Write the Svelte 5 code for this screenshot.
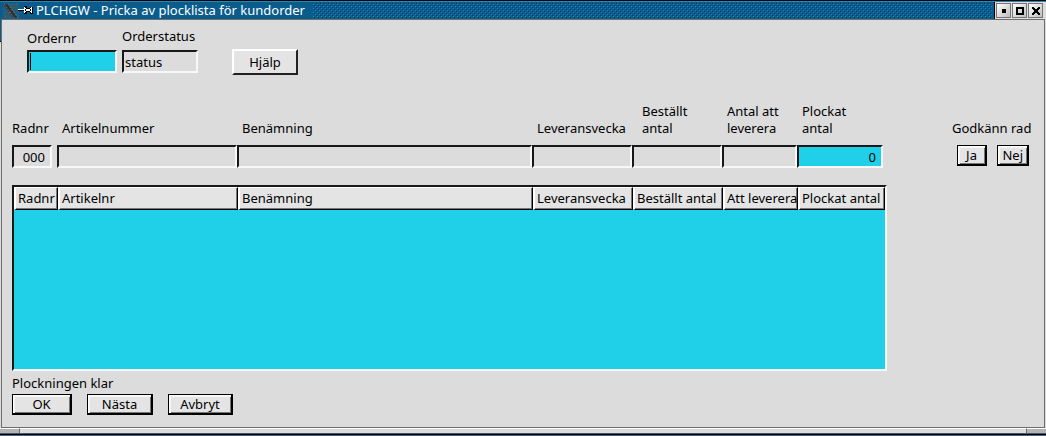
<script>
  let orderNo = $state('');
  let picked = $state('0');

  const fields = [
    { id: 'artikel', label: 'Artikelnummer' },
    { id: 'benamning', label: 'Benämning' },
    { id: 'vecka', label: 'Leveransvecka' },
    { id: 'bestallt', label: 'Beställt\nantal', inset: true },
    { id: 'leverera', label: 'Antal att\nleverera' }
  ];
  const columns = ['Radnr', 'Artikelnr', 'Benämning', 'Leveransvecka', 'Beställt antal', 'Att leverera', 'Plockat antal'];
</script>

<div class="window">
  <header class="titlebar">
    <svg class="xlogo" width="16" height="16" viewBox="0 0 16 16" aria-hidden="true">
      <path d="M0 0h16v16H0z" fill="#1f5f80" />
      <path d="M0 1h5l10 14h-5z" fill="#2c3234" />
      <path d="M13 1h2L9 8 8 7zM7 8l1 1-6 6H0z" fill="#3c4446" />
      <path d="M1 1l10 14M5 1l10 14M14 1L9 7M7 9l-6 6" stroke="#7d7d7d" stroke-dasharray="1 1" fill="none" />
    </svg>
    <svg class="pin" width="15" height="9" viewBox="0 0 15 9" shape-rendering="crispEdges" aria-hidden="true">
      <path d="M0 5h7V4H0zM6 0h3v2h3V1h3v7h-3V6H9v2H6z" fill="#000" />
      <path d="M0 3h6v1H0zM6 1h1v6H6zM8 3h4v2H8zM13 1h1v6h-1zM12 2h1v1h-1zM12 5h1v1h-1zM7 2h1v1H7zM7 5h1v1H7z" fill="#fff" />
    </svg>
    <h1>PLCHGW - Pricka av plocklista för kundorder</h1>
    <svg class="grip" shape-rendering="crispEdges" aria-hidden="true">
      <defs>
        <pattern id="dots" width="4" height="4" patternUnits="userSpaceOnUse">
          <path d="M0 1h1v1H0zM2 3h1v1H2z" fill="#1a8ac8" />
          <path d="M1 2h1v1H1zM3 0h1v1H3z" fill="#04385c" />
        </pattern>
      </defs>
      <rect width="100%" height="100%" fill="url(#dots)" />
    </svg>
    <div class="controls">
      <button aria-label="Minimera"><svg width="11" height="11" viewBox="0 0 11 11" shape-rendering="crispEdges"><path d="M4 4h4v4H4z" /></svg></button>
      <button aria-label="Maximera"><svg width="11" height="11" viewBox="0 0 11 11" shape-rendering="crispEdges"><path fill-rule="evenodd" d="M2 2h8v8H2zM4 4v4h4V4z" /></svg></button>
      <button aria-label="Stäng"><svg width="11" height="11" viewBox="0 0 11 11" shape-rendering="crispEdges"><path d="M2 2h2v1h1v1h2V3h1V2h2v2H9v1H8v2h1v1h1v2H8V9H7V8H5v1H4v1H2V8h1V7h1V5H3V4H2z" /></svg></button>
    </div>
  </header>

  <main>
    <form class="order" onsubmit={(e) => e.preventDefault()}>
      <div class="item number">
        <label for="ordernr">Ordernr</label>
        <div class="entry">
          <input id="ordernr" class="field active" bind:value={orderNo} />
          <span class="caret"></span>
        </div>
      </div>
      <div class="item status">
        <label for="status">Orderstatus</label>
        <input id="status" class="field" value="status" readonly />
      </div>
      <button type="button" class="help">Hjälp</button>
    </form>

    <div class="record">
      <div class="fields">
        <div class="cell row">
          <label for="radnr">Radnr</label>
          <input id="radnr" class="field right" value="000" readonly />
        </div>
        {#each fields as f}
          <div class="cell">
            <label for={f.id} class:inset={f.inset}>{f.label}</label>
            <input id={f.id} class="field" readonly />
          </div>
        {/each}
        <div class="cell">
          <label for="plockat">{'Plockat\nantal'}</label>
          <input id="plockat" class="field active right" bind:value={picked} />
        </div>
      </div>
      <div class="approve">
        <span>Godkänn rad</span>
        <div class="pair">
          <button class="push">Ja</button>
          <button class="push">Nej</button>
        </div>
      </div>
    </div>

    <div class="list">
      <table>
        <thead>
          <tr>
            {#each columns as c}<th scope="col">{c}</th>{/each}
          </tr>
        </thead>
        <tbody></tbody>
      </table>
    </div>

    <footer>
      <span>Plockningen klar</span>
      <div class="actions">
        <button class="push ok">OK</button>
        <button class="push">Nästa</button>
        <button class="push">Avbryt</button>
      </div>
    </footer>
  </main>
  <div class="sill"><i></i><i></i><i></i></div>
</div>

<style>
  :global(body) { margin: 0; background: #dcdcdc; }
  * { box-sizing: border-box; }
  .window {
    min-height: 100vh;
    display: flex;
    flex-direction: column;
    border-top: 1px solid #000;
    border-bottom: 1px solid #34689a;
    background: linear-gradient(90deg, #0000 2px, #dcdcdc 2px), linear-gradient(#0a5c8c 40px, #000 40px, #000 41px, #dcdcdc 41px);
    font: 13px/17px "Noto Sans", sans-serif;
    color: #000;
  }
  .titlebar {
    display: flex;
    align-items: center;
    height: 18px;
    padding-left: 3px;
    background: #0a5c8c;
    border-top: 1px solid #2288b8;
    color: #fff;
  }
  .pin { margin: 0 3px 0 -1px; }
  h1 { margin: 0; font-size: 13px; font-weight: 400; white-space: nowrap; }
  .grip {
    flex: 1;
    min-width: 0;
    height: 15px;
    margin: 0 2px 0 8px;
  }
  .controls {
    display: flex;
    align-self: stretch;
    gap: 1px;
    padding: 1px 3px 0 1px;
    background: #dcdcdc;
    border-left: 1px solid #000;
  }
  .controls button {
    display: flex;
    align-items: center;
    justify-content: center;
    width: 15px;
    height: 15px;
    padding: 0;
    border: 1px solid #777;
    background: linear-gradient(135deg, #fff, #bbb);
  }
  main {
    flex: 1;
    display: flex;
    flex-direction: column;
    margin: 0 1px;
    padding: 8px 12px 12px 10px;
    background: #dcdcdc;
    border: 1px solid #6e6e6e;
  }
  label, footer span, .approve span { display: block; white-space: pre-line; }
  .field {
    display: block;
    width: 100%;
    height: 23px;
    padding: 0 1px;
    border: 2px solid;
    border-color: #181818 #f8f8f8 #f8f8f8 #181818;
    border-radius: 0;
    outline: 0;
    background: #dcdcdc;
    color: #000;
    font: inherit;
  }
  .field.active { background: #1fd0e8; }
  .field.right { text-align: right; padding-right: 5px; }
  .order { display: flex; align-items: flex-end; padding-left: 15px; gap: 5px; }
  .item { display: flex; flex-direction: column; }
  .number { width: 90px; padding-top: 2px; gap: 3px; }
  .status { width: 76px; gap: 5px; }
  .entry { position: relative; }
  .caret { position: absolute; left: 3px; top: 3px; width: 1px; height: 17px; background: #000; }
  .help {
    width: 66px;
    height: 26px;
    margin: 0 0 -2px 29px;
    padding: 0;
    border: 2px solid;
    border-color: #fff #222 #222 #fff;
    background: #e4e4e4;
    font: inherit;
  }
  .record { display: flex; align-items: flex-end; margin-top: 30px; }
  .fields {
    flex: 1;
    display: grid;
    grid-template-columns: 45px 180px minmax(100px, 1fr) 100px 90px 75px 86px;
    align-items: end;
  }
  .cell { display: flex; flex-direction: column; gap: 8px; }
  .cell label { padding-left: 5px; }
  .cell.row { padding-right: 5px; }
  .cell.row label { padding-left: 0; }
  .cell label.inset { padding-left: 10px; }
  .approve { width: 80px; margin-left: 69px; white-space: nowrap; }
  .pair { display: flex; justify-content: space-between; padding: 8px 3px 2px 5px; }
  .push {
    height: 21px;
    padding: 0 4px;
    border: 1px solid #000;
    border-right-width: 2px;
    border-bottom-width: 2px;
    background: #e4e4e4;
    box-shadow: inset 1px 1px #fff, inset 2px 2px #f4f4f4, inset -1px -1px #777;
    font: inherit;
    line-height: 16px;
  }
  .pair .push { min-width: 30px; }
  .list {
    flex: 1;
    display: flex;
    flex-direction: column;
    margin: 17px 145px 0 0;
    min-height: 186px;
    border: 2px solid;
    border-color: #181818 #f8f8f8 #f8f8f8 #181818;
    background: #1fd0e8;
  }
  table { width: 100%; table-layout: fixed; border-collapse: separate; border-spacing: 0; background: #dcdcdc; }
  th {
    height: 23px;
    padding: 0 0 0 2px;
    text-align: left;
    font-weight: 400;
    white-space: nowrap;
    background: #e4e4e4;
    border: solid;
    border-width: 1px 1px 1px 2px;
    border-color: #fff #000 #000 #fff;
    box-shadow: inset -1px -1px #777;
  }
  th:nth-child(1) { width: 44px; }
  th:nth-child(2) { width: 180px; }
  th:nth-child(4) { width: 100px; }
  th:nth-child(5) { width: 90px; }
  th:nth-child(6) { width: 75px; }
  th:nth-child(7) { width: 87px; }
  footer { padding-top: 4px; }
  .actions { display: flex; gap: 15px; padding-top: 2px; }
  .actions .push { width: 65px; }
  .actions .push:nth-child(2) { width: 66px; }
  .actions .ok { width: 60px; }
  .sill {
    display: flex;
    height: 7px;
    border-bottom: 1px solid #000;
  }
  .sill i { width: 19px; background: #b4b4b4; border-top: 1px solid #fff; border-bottom: 1px solid #555; }
  .sill i:nth-child(2) { flex: 1; background: #dcdcdc; border-left: 1px solid #6e6e6e; border-right: 1px solid #6e6e6e; }
</style>
